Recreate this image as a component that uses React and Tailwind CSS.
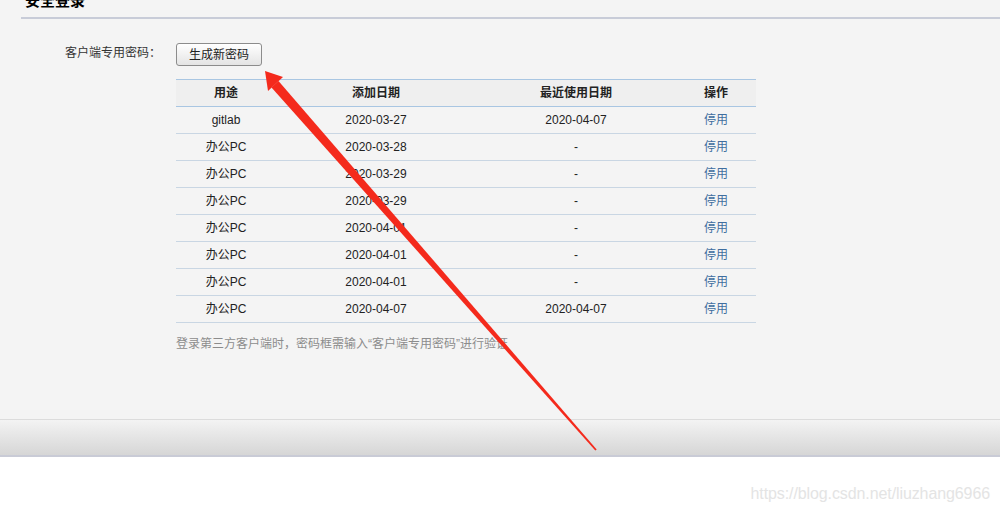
import React from 'react';

const rows = [
  { use: 'gitlab', added: '2020-03-27', last: '2020-04-07' },
  { use: '办公PC', added: '2020-03-28', last: '-' },
  { use: '办公PC', added: '2020-03-29', last: '-' },
  { use: '办公PC', added: '2020-03-29', last: '-' },
  { use: '办公PC', added: '2020-04-01', last: '-' },
  { use: '办公PC', added: '2020-04-01', last: '-' },
  { use: '办公PC', added: '2020-04-01', last: '-' },
  { use: '办公PC', added: '2020-04-07', last: '2020-04-07' },
];

const Arrow = () => (
  <svg className="absolute inset-0 pointer-events-none" width="1000" height="509" viewBox="0 0 1000 509">
    <polygon points="265,71 283,77 268,91" fill="#f42a1c" />
    <polygon points="278.5,81 271.5,87.5 595.3,450.6 596.7,449.4" fill="#f42a1c" />
  </svg>
);

const App = () => {
  return (
    <div
      className="relative w-[1000px] h-[509px] overflow-hidden bg-white text-[12px] text-[#222]"
      style={{ fontFamily: '"Liberation Sans", "Noto Sans CJK SC", sans-serif' }}
    >
      <div className="h-[419px] bg-[#f4f4f4] flow-root">
        {/* section title */}
        <div className="ml-[21px] h-[19px] border-b-2 border-[#c8ccd8] pl-[4px]">
          <div className="relative -top-[7px] text-[15px] leading-[15px] font-bold text-black">安全登录</div>
        </div>

        {/* app password row */}
        <div className="flex items-start mt-[24px]">
          <div className="w-[161px] text-right pt-[1px] leading-[18px] text-[#333]">客户端专用密码：</div>
          <button className="ml-[15px] w-[86px] h-[23px] rounded-[3px] border border-[#8c8c8c] bg-gradient-to-b from-white to-[#e4e4e4] text-[12px] leading-none text-[#222]">
            生成新密码
          </button>
        </div>

        {/* table */}
        <div className="ml-[176px] mt-[13px] w-[580px]">
          <div className="grid grid-cols-[100px_200px_200px_80px] h-[28px] items-center text-center font-bold bg-[#efefef] border-y border-[#a9c6e2]">
            <div>用途</div>
            <div>添加日期</div>
            <div>最近使用日期</div>
            <div>操作</div>
          </div>
          {rows.map((r, i) => (
            <div
              key={i}
              className="grid grid-cols-[100px_200px_200px_80px] h-[27px] items-center text-center border-b border-[#c9d6e3]"
            >
              <div>{r.use}</div>
              <div>{r.added}</div>
              <div>{r.last}</div>
              <div className="text-[#3f6e9f]">停用</div>
            </div>
          ))}
          <p className="mt-[13px] leading-[16px] text-[#8c8c8c]">
            登录第三方客户端时，密码框需输入“客户端专用密码”进行验证
          </p>
        </div>
      </div>

      {/* footer bar */}
      <div className="h-[38px] border-t border-[#dcdcdc] border-b-2 border-b-[#c9cbd6] bg-gradient-to-b from-[#f3f3f3] to-[#d6d6d6]" />

      {/* watermark */}
      <div className="flex justify-end pr-[10px] pt-[25px]">
        <span className="text-[16px] tracking-[-0.1px] text-[#e4e4e4]">
          https://blog.csdn.net/liuzhang6966
        </span>
      </div>

      <Arrow />
    </div>
  );
};

export default App;
